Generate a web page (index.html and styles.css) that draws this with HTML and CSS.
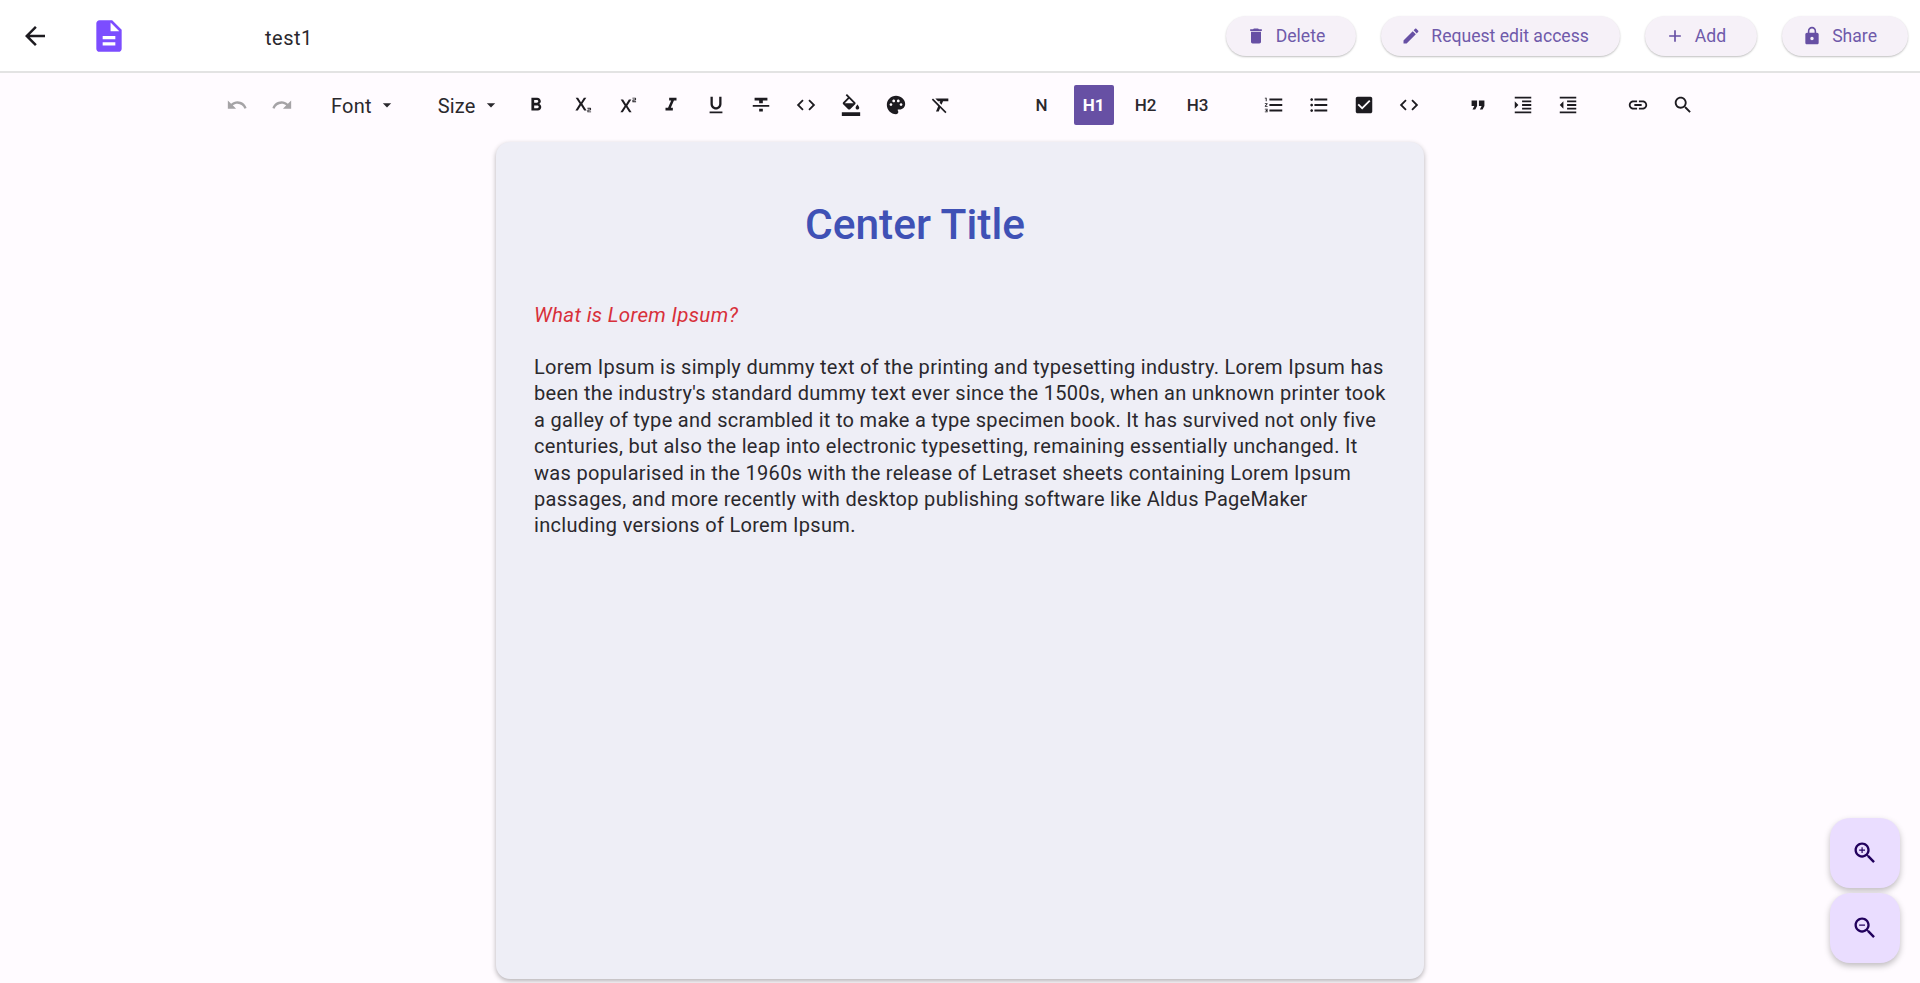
FILE: index.html
```html
<!DOCTYPE html>
<html lang="en">
<head>
    <meta charset="UTF-8">
    <meta name="viewport" content="width=device-width, initial-scale=1.0">
    <title>test1</title>
    <link rel="stylesheet" href="styles.css">
</head>
<body>

    <!-- icon sprite -->
    <svg class="sprite" xmlns="http://www.w3.org/2000/svg">
        <symbol id="i-back" viewBox="0 0 24 24"><path d="M20 11H7.83l5.59-5.59L12 4l-8 8 8 8 1.41-1.41L7.83 13H20v-2z"/></symbol>
        <symbol id="i-doc" viewBox="0 0 24 24"><path d="M14 2H6c-1.1 0-2 .9-2 2v16c0 1.1.89 2 1.99 2H18c1.1 0 2-.9 2-2V8l-6-6zm2 16H8v-2h8v2zm0-4H8v-2h8v2zm-3-5V3.5L18.5 9H13z"/></symbol>
        <symbol id="i-delete" viewBox="0 0 24 24"><path d="M6 19c0 1.1.9 2 2 2h8c1.1 0 2-.9 2-2V7H6v12zM19 4h-3.5l-1-1h-5l-1 1H5v2h14V4z"/></symbol>
        <symbol id="i-edit" viewBox="0 0 24 24"><path d="M3 17.25V21h3.75L17.81 9.94l-3.75-3.75L3 17.25zM20.71 7.04c.39-.39.39-1.02 0-1.41l-2.34-2.34c-.39-.39-1.02-.39-1.41 0l-1.83 1.83 3.75 3.75 1.83-1.83z"/></symbol>
        <symbol id="i-add" viewBox="0 0 24 24"><path d="M19 13h-6v6h-2v-6H5v-2h6V5h2v6h6v2z"/></symbol>
        <symbol id="i-lock" viewBox="0 0 24 24"><path d="M18 8h-1V6c0-2.76-2.24-5-5-5S7 3.24 7 6v2H6c-1.1 0-2 .9-2 2v10c0 1.1.9 2 2 2h12c1.1 0 2-.9 2-2V10c0-1.1-.9-2-2-2zm-6 9c-1.1 0-2-.9-2-2s.9-2 2-2 2 .9 2 2-.9 2-2 2zm3.1-9H8.9V6c0-1.71 1.39-3.1 3.1-3.1 1.71 0 3.1 1.39 3.1 3.1v2z"/></symbol>
        <symbol id="i-undo" viewBox="0 0 24 24"><path d="M12.5 8c-2.65 0-5.05.99-6.9 2.6L2 7v9h9l-3.62-3.62c1.39-1.16 3.16-1.88 5.12-1.88 3.54 0 6.55 2.31 7.6 5.5l2.37-.78C21.08 11.03 17.15 8 12.5 8z"/></symbol>
        <symbol id="i-redo" viewBox="0 0 24 24"><path d="M18.4 10.6C16.55 8.99 14.15 8 11.5 8c-4.65 0-8.58 3.03-9.96 7.22L3.9 16c1.05-3.19 4.05-5.5 7.6-5.5 1.95 0 3.73.72 5.12 1.88L13 16h9V7l-3.6 3.6z"/></symbol>
        <symbol id="i-drop" viewBox="0 0 24 24"><path d="M7 10l5 5 5-5z"/></symbol>
        <symbol id="i-bold" viewBox="0 0 24 24"><path d="M15.6 10.79c.97-.67 1.65-1.77 1.65-2.79 0-2.26-1.75-4-4-4H7v14h7.04c2.09 0 3.71-1.7 3.71-3.79 0-1.52-.86-2.82-2.15-3.42zM10 6.5h3c.83 0 1.5.67 1.5 1.5s-.67 1.5-1.5 1.5h-3v-3zm3.5 9H10v-3h3.5c.83 0 1.5.67 1.5 1.5s-.67 1.5-1.5 1.5z"/></symbol>
        <symbol id="i-sub" viewBox="0 0 24 24"><path d="M22 18h-2v1h3v1h-4v-2c0-.55.45-1 1-1h2v-1h-3v-1h3c.55 0 1 .45 1 1v1c0 .55-.45 1-1 1zM5.88 18h2.66l3.4-5.42h.12l3.4 5.42h2.66l-4.65-7.27L17.81 4h-2.68l-3.07 4.99h-.12L8.85 4H6.19l4.32 6.73L5.88 18z"/></symbol>
        <symbol id="i-sup" viewBox="0 0 24 24"><path d="M22 7h-2v1h3v1h-4V7c0-.55.45-1 1-1h2V5h-3V4h3c.55 0 1 .45 1 1v1c0 .55-.45 1-1 1zM5.88 20h2.66l3.4-5.42h.12l3.4 5.42h2.66l-4.65-7.27L17.81 6h-2.68l-3.07 4.99h-.12L8.85 6H6.19l4.32 6.73L5.88 20z"/></symbol>
        <symbol id="i-italic" viewBox="0 0 24 24"><path d="M10 4v3h2.21l-3.42 8H6v3h8v-3h-2.21l3.42-8H18V4z"/></symbol>
        <symbol id="i-underline" viewBox="0 0 24 24"><path d="M12 17c3.31 0 6-2.69 6-6V3h-2.5v8c0 1.93-1.57 3.5-3.5 3.5S8.5 12.93 8.5 11V3H6v8c0 3.31 2.69 6 6 6zm-7 2v2h14v-2H5z"/></symbol>
        <symbol id="i-strike" viewBox="0 0 24 24"><path d="M10 19h4v-3h-4v3zM5 4v3h5v3h4V7h5V4H5zM3 14h18v-2H3v2z"/></symbol>
        <symbol id="i-code" viewBox="0 0 24 24"><path d="M9.4 16.6L4.8 12l4.6-4.6L8 6l-6 6 6 6 1.4-1.4zm5.2 0l4.6-4.6-4.6-4.6L16 6l6 6-6 6-1.4-1.4z"/></symbol>
        <symbol id="i-fill" viewBox="0 0 24 24"><path d="M16.56 8.94L7.62 0 6.21 1.41l2.38 2.38-5.15 5.15c-.59.59-.59 1.54 0 2.12l5.5 5.5c.29.29.68.44 1.06.44s.77-.15 1.06-.44l5.5-5.5c.59-.58.59-1.53 0-2.12zM5.21 10L10 5.21 14.79 10H5.21zM19 11.5s-2 2.17-2 3.5c0 1.1.9 2 2 2s2-.9 2-2c0-1.33-2-3.5-2-3.5zM2 20h20v4H2v-4z"/></symbol>
        <symbol id="i-palette" viewBox="0 0 24 24"><path d="M12 2C6.49 2 2 6.49 2 12s4.49 10 10 10c1.38 0 2.5-1.12 2.5-2.5 0-.61-.23-1.2-.64-1.67-.08-.1-.13-.21-.13-.33 0-.28.22-.5.5-.5H16c3.31 0 6-2.69 6-6 0-4.96-4.49-9-10-9zm5.5 11c-.83 0-1.5-.67-1.5-1.5s.67-1.5 1.5-1.5 1.5.67 1.5 1.5-.67 1.5-1.5 1.5zm-3-4c-.83 0-1.5-.67-1.5-1.5S13.67 6 14.5 6s1.5.67 1.5 1.5S15.33 9 14.5 9zM5 11.5c0-.83.67-1.5 1.5-1.5s1.5.67 1.5 1.5S7.33 13 6.5 13 5 12.33 5 11.5zm6-4c0 .83-.67 1.5-1.5 1.5S8 8.33 8 7.5 8.67 6 9.5 6s1.5.67 1.5 1.5z"/></symbol>
        <symbol id="i-clear" viewBox="0 0 24 24"><path d="M3.27 5L2 6.27l6.97 6.97L6.5 19h3l1.57-3.66L16.73 21 18 19.73 3.55 5.27 3.27 5zM6 5v.18L8.82 8h2.4l-.72 1.68 2.1 2.1L14.21 8H20V5H6z"/></symbol>
        <symbol id="i-ol" viewBox="0 0 24 24"><path d="M2 17h2v.5H3v1h1v.5H2v1h3v-4H2v1zm1-9h1V4H2v1h1v3zm-1 3h1.8L2 13.1v.9h3v-1H3.2L5 10.9V10H2v1zm5-6v2h14V5H7zm0 14h14v-2H7v2zm0-6h14v-2H7v2z"/></symbol>
        <symbol id="i-ul" viewBox="0 0 24 24"><path d="M4 10.5c-.83 0-1.5.67-1.5 1.5s.67 1.5 1.5 1.5 1.5-.67 1.5-1.5-.67-1.5-1.5-1.5zm0-6c-.83 0-1.5.67-1.5 1.5S3.17 7.5 4 7.5 5.5 6.83 5.5 6 4.83 4.5 4 4.5zm0 12c-.83 0-1.5.68-1.5 1.5s.68 1.5 1.5 1.5 1.5-.68 1.5-1.5-.67-1.5-1.5-1.5zM7 19h14v-2H7v2zm0-6h14v-2H7v2zm0-8v2h14V5H7z"/></symbol>
        <symbol id="i-check" viewBox="0 0 24 24"><path d="M19 3H5c-1.11 0-2 .9-2 2v14c0 1.1.89 2 2 2h14c1.11 0 2-.9 2-2V5c0-1.1-.89-2-2-2zm-9 14l-5-5 1.41-1.41L10 14.17l7.59-7.59L19 8l-9 9z"/></symbol>
        <symbol id="i-quote" viewBox="0 0 24 24"><path d="M6 17h3l2-4V7H5v6h3zm8 0h3l2-4V7h-6v6h3z"/></symbol>
        <symbol id="i-indent" viewBox="0 0 24 24"><path d="M3 21h18v-2H3v2zM3 8v8l4-4-4-4zm8 9h10v-2H11v2zM3 3v2h18V3H3zm8 6h10V7H11v2zm0 4h10v-2H11v2z"/></symbol>
        <symbol id="i-outdent" viewBox="0 0 24 24"><path d="M11 17h10v-2H11v2zm-8-5l4 4V8l-4 4zm0 9h18v-2H3v2zM3 3v2h18V3H3zm8 6h10V7H11v2zm0 4h10v-2H11v2z"/></symbol>
        <symbol id="i-link" viewBox="0 0 24 24"><path d="M3.9 12c0-1.71 1.39-3.1 3.1-3.1h4V7H7c-2.76 0-5 2.24-5 5s2.24 5 5 5h4v-1.9H7c-1.71 0-3.1-1.39-3.1-3.1zM8 13h8v-2H8v2zm9-6h-4v1.9h4c1.71 0 3.1 1.39 3.1 3.1s-1.39 3.1-3.1 3.1h-4V17h4c2.76 0 5-2.24 5-5s-2.24-5-5-5z"/></symbol>
        <symbol id="i-search" viewBox="0 0 24 24"><path d="M15.5 14h-.79l-.28-.27C15.41 12.59 16 11.11 16 9.5 16 5.91 13.09 3 9.5 3S3 5.91 3 9.5 5.91 16 9.5 16c1.61 0 3.09-.59 4.23-1.57l.27.28v.79l5 4.99L20.49 19l-4.99-5zm-6 0C7.01 14 5 11.99 5 9.5S7.01 5 9.5 5 14 7.01 14 9.5 11.99 14 9.5 14z"/></symbol>
        <symbol id="i-zoom-in" viewBox="0 0 24 24"><path d="M15.5 14h-.79l-.28-.27C15.41 12.59 16 11.11 16 9.5 16 5.91 13.09 3 9.5 3S3 5.91 3 9.5 5.91 16 9.5 16c1.61 0 3.09-.59 4.23-1.57l.27.28v.79l5 4.99L20.49 19l-4.99-5zm-6 0C7.01 14 5 11.99 5 9.5S7.01 5 9.5 5 14 7.01 14 9.5 11.99 14 9.5 14zM12 10h-2v2H9v-2H7V9h2V7h1v2h2v1z"/></symbol>
        <symbol id="i-zoom-out" viewBox="0 0 24 24"><path d="M15.5 14h-.79l-.28-.27C15.41 12.59 16 11.11 16 9.5 16 5.91 13.09 3 9.5 3S3 5.91 3 9.5 5.91 16 9.5 16c1.61 0 3.09-.59 4.23-1.57l.27.28v.79l5 4.99L20.49 19l-4.99-5zm-6 0C7.01 14 5 11.99 5 9.5S7.01 5 9.5 5 14 7.01 14 9.5 11.99 14 9.5 14zM7 9h5v1H7z"/></symbol>
    </svg>

    <header class="topbar">
        <button class="back-btn"><svg class="icon-back"><use href="#i-back"/></svg></button>
        <svg class="doc-icon"><use href="#i-doc"/></svg>
        <span class="doc-name">test1</span>
        <div class="actions">
            <button class="pill"><svg><use href="#i-delete"/></svg>Delete</button>
            <button class="pill"><svg><use href="#i-edit"/></svg>Request edit access</button>
            <button class="pill"><svg><use href="#i-add"/></svg>Add</button>
            <button class="pill"><svg><use href="#i-lock"/></svg>Share</button>
        </div>
    </header>

    <div class="toolbar">
        <div class="tool-group">
            <button class="tool disabled"><svg><use href="#i-undo"/></svg></button>
            <button class="tool disabled"><svg><use href="#i-redo"/></svg></button>
        </div>
        <button class="dropdown font-drop">Font<svg><use href="#i-drop"/></svg></button>
        <button class="dropdown size-drop">Size<svg><use href="#i-drop"/></svg></button>
        <div class="tool-group">
            <button class="tool"><svg><use href="#i-bold"/></svg></button>
            <button class="tool"><svg><use href="#i-sub"/></svg></button>
            <button class="tool"><svg><use href="#i-sup"/></svg></button>
            <button class="tool"><svg><use href="#i-italic"/></svg></button>
            <button class="tool"><svg><use href="#i-underline"/></svg></button>
            <button class="tool"><svg><use href="#i-strike"/></svg></button>
            <button class="tool"><svg><use href="#i-code"/></svg></button>
            <button class="tool"><svg><use href="#i-fill"/></svg></button>
            <button class="tool"><svg><use href="#i-palette"/></svg></button>
            <button class="tool"><svg><use href="#i-clear"/></svg></button>
        </div>
        <div class="tool-group headings">
            <button class="heading">N</button>
            <button class="heading active">H1</button>
            <button class="heading">H2</button>
            <button class="heading">H3</button>
        </div>
        <div class="tool-group lists">
            <button class="tool"><svg><use href="#i-ol"/></svg></button>
            <button class="tool"><svg><use href="#i-ul"/></svg></button>
            <button class="tool"><svg><use href="#i-check"/></svg></button>
            <button class="tool"><svg><use href="#i-code"/></svg></button>
        </div>
        <div class="tool-group blocks">
            <button class="tool"><svg><use href="#i-quote"/></svg></button>
            <button class="tool"><svg><use href="#i-indent"/></svg></button>
            <button class="tool"><svg><use href="#i-outdent"/></svg></button>
        </div>
        <div class="tool-group extras">
            <button class="tool"><svg><use href="#i-link"/></svg></button>
            <button class="tool"><svg><use href="#i-search"/></svg></button>
        </div>
    </div>

    <main class="page">
        <article class="sheet">
            <h1 class="sheet-title">Center Title</h1>
            <p class="sheet-lead">What is Lorem Ipsum?</p>
            <p class="sheet-body">Lorem Ipsum is simply dummy text of the printing and typesetting industry. Lorem Ipsum has been the industry's standard dummy text ever since the 1500s, when an unknown printer took a galley of type and scrambled it to make a type specimen book. It has survived not only five centuries, but also the leap into electronic typesetting, remaining essentially unchanged. It was popularised in the 1960s with the release of Letraset sheets containing Lorem Ipsum passages, and more recently with desktop publishing software like Aldus PageMaker including versions of Lorem Ipsum.</p>
        </article>
    </main>

    <div class="zoom-btns">
        <button class="fab"><svg><use href="#i-zoom-in"/></svg></button>
        <button class="fab"><svg><use href="#i-zoom-out"/></svg></button>
    </div>

</body>
</html>
```

FILE: styles.css
```css
/* base */
* { box-sizing: border-box; }
html, body { height: 100%; }
body { margin: 0; overflow: hidden; background-color: #fffbff; color: #2a282d; font-family: Roboto, sans-serif; }
button { border: none; background: none; padding: 0; font-family: inherit; color: inherit; cursor: pointer; }
svg { fill: currentColor; display: block; }
.sprite { display: none; }

/* top bar */
.topbar { height: 73px; display: flex; align-items: center; background-color: #fff; border-bottom: 2px solid #e3e3e3; padding: 0 12px 0 20px; }
.back-btn { width: 30px; height: 30px; color: #1d1b20; }
.icon-back { width: 30px; height: 30px; }
.doc-icon { width: 38px; height: 38px; margin-left: 40px; color: #7c4dff; }
.doc-name { margin: 4px 0 0 137px; font-size: 20px; letter-spacing: 0.5px; }
.actions { margin-left: auto; display: flex; gap: 25px; }
.pill { height: 40px; display: flex; align-items: center; gap: 10px; padding: 0 31px 0 20px; border-radius: 20px; background-color: #f6f1f8; color: #6f5aaa; font-size: 17.6px; box-shadow: 0 1px 2px rgba(0,0,0,.25); }
.pill svg { width: 20px; height: 20px; color: #6750a4; }

/* toolbar */
.toolbar { height: 69px; display: flex; align-items: center; padding-left: 214px; padding-bottom: 6px; }
.tool-group { display: flex; align-items: center; }
.tool { width: 45px; height: 40px; display: flex; align-items: center; justify-content: center; color: #1d1b20; }
.tool svg { width: 22px; height: 22px; }
.tool.disabled { color: #a5a3a6; }
.dropdown { display: flex; align-items: center; padding-top: 2px; font-size: 20px; letter-spacing: 0.2px; }
.dropdown svg { width: 20px; height: 20px; margin: -2px 0 0 5px; }
.font-drop { margin-left: 27px; }
.size-drop { margin-left: 41px; margin-right: 13px; }
.headings { margin-left: 52px; }
.heading { width: 52px; height: 40px; display: flex; align-items: center; justify-content: center; font-size: 17px; font-weight: 500; position: relative; }
.heading.active { color: #fff; font-weight: 700; }
.heading.active::before { content: ""; position: absolute; z-index: -1; top: 0; bottom: 0; left: 6px; right: 6px; background-color: #6750a4; border-radius: 2px; }
.lists { margin-left: 28px; }
.blocks { margin-left: 24px; }
.extras { margin-left: 25px; }

/* document */
.page { display: flex; justify-content: center; }
.sheet { width: 928px; height: 837px; background-color: #eeeef6; border-radius: 14px; padding: 0 30px 0 38px; box-shadow: 0 2px 5px rgba(0,0,0,.3); }
.sheet-title { margin: 58px 98px 0 0; text-align: center; color: #3f51b5; font-size: 42.5px; line-height: 50px; font-weight: 500; }
.sheet-lead { margin: 52px 0 0; color: #d8303a; font-style: italic; font-size: 20.6px; line-height: 26px; letter-spacing: 0.3px; }
.sheet-body { margin: 26px 0 0; font-size: 20px; line-height: 26.4px; letter-spacing: 0.3px; }

/* zoom buttons */
.zoom-btns { position: absolute; right: 20px; bottom: 20px; display: flex; flex-direction: column; gap: 5px; }
.fab { width: 70px; height: 70px; display: flex; align-items: center; justify-content: center; border-radius: 20px; background-color: #eaddff; color: #21005d; box-shadow: 0 3px 6px rgba(0,0,0,.25); }
.fab svg { width: 28px; height: 28px; }
```
